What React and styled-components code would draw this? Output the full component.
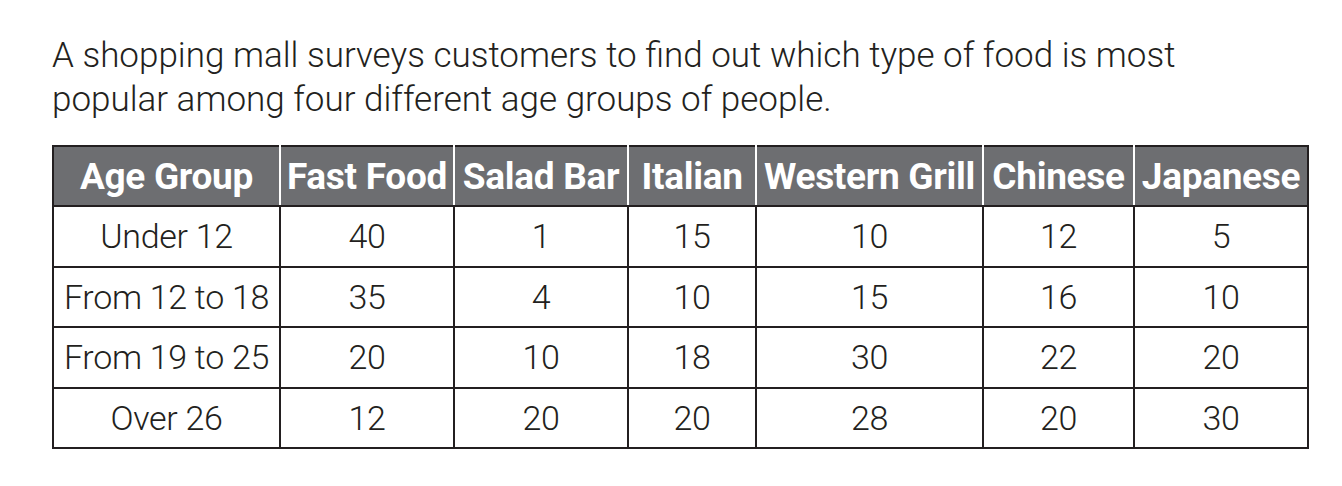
import React from "react";
import styled, { createGlobalStyle } from "styled-components";

const GlobalStyle = createGlobalStyle`
  html, body {
    margin: 0;
    padding: 0;
    background: #ffffff;
  }
  body {
    font-family: Roboto, "Liberation Sans", sans-serif;
    color: #231f20;
  }
`;

const columns = [
  { label: "Age Group", width: 227 },
  { label: "Fast Food", width: 174 },
  { label: "Salad Bar", width: 174 },
  { label: "Italian", width: 128 },
  { label: "Western Grill", width: 227 },
  { label: "Chinese", width: 151 },
  { label: "Japanese", width: 174 },
];

const rows = [
  ["Under 12", 40, 1, 15, 10, 12, 5],
  ["From 12 to 18", 35, 4, 10, 15, 16, 10],
  ["From 19 to 25", 20, 10, 18, 30, 22, 20],
  ["Over 26", 12, 20, 20, 28, 20, 30],
];

export default function App() {
  return (
    <>
      <GlobalStyle />
      <Page>
        <Intro>
          A shopping mall surveys customers to find out which type of food is most
          <br />
          popular among four different age groups of people.
        </Intro>
        <SurveyTable>
          <colgroup>
            {columns.map((c) => (
              <col key={c.label} style={{ width: c.width }} />
            ))}
          </colgroup>
          <thead>
            <tr>
              {columns.map((c) => (
                <HeadCell key={c.label}>{c.label}</HeadCell>
              ))}
            </tr>
          </thead>
          <tbody>
            {rows.map((r) => (
              <tr key={r[0]}>
                {r.map((v, i) => (
                  <Cell key={i}>{v}</Cell>
                ))}
              </tr>
            ))}
          </tbody>
        </SurveyTable>
      </Page>
    </>
  );
}

const Page = styled.div`
  padding: 34px 0 0 52px;
`;

const Intro = styled.p`
  margin: 0 0 23px 0;
  font-size: 35px;
  line-height: 44px;
  font-weight: 300;
  color: #231f20;
`;

const SurveyTable = styled.table`
  border-collapse: collapse;
  table-layout: fixed;
  width: 1255px;
  border: 2px solid #231f20;
`;

const HeadCell = styled.th`
  height: 58px;
  padding: 0;
  background: #6d6e71;
  color: #ffffff;
  font-size: 37px;
  font-weight: 700;
  letter-spacing: -0.3px;
  text-align: center;
  white-space: nowrap;
  border-left: 2px solid #ffffff;
  border-bottom: 2px solid #231f20;
  &:first-child {
    border-left: 2px solid #231f20;
  }
`;

const Cell = styled.td`
  height: 58.5px;
  padding: 0;
  font-size: 34px;
  font-weight: 300;
  letter-spacing: -0.3px;
  text-align: center;
  white-space: nowrap;
  color: #231f20;
  border: 2px solid #231f20;
`;
